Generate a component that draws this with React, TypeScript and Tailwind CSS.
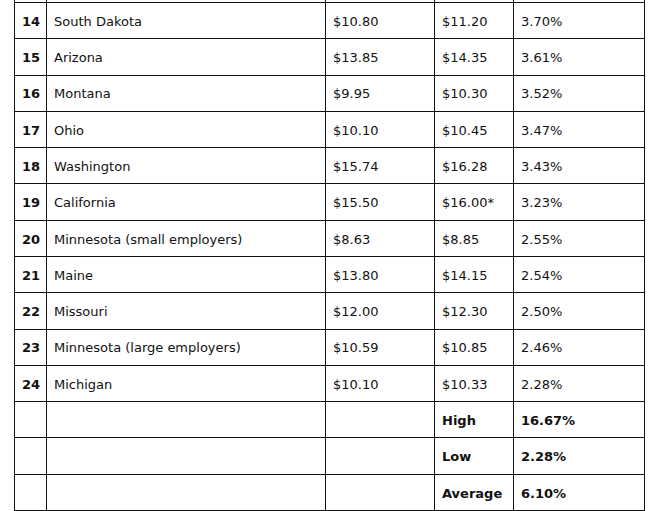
import React from "react";

type Row = { rank: string; state: string; a: string; b: string; pct: string };

const rows: Row[] = [
  { rank: "14", state: "South Dakota", a: "$10.80", b: "$11.20", pct: "3.70%" },
  { rank: "15", state: "Arizona", a: "$13.85", b: "$14.35", pct: "3.61%" },
  { rank: "16", state: "Montana", a: "$9.95", b: "$10.30", pct: "3.52%" },
  { rank: "17", state: "Ohio", a: "$10.10", b: "$10.45", pct: "3.47%" },
  { rank: "18", state: "Washington", a: "$15.74", b: "$16.28", pct: "3.43%" },
  { rank: "19", state: "California", a: "$15.50", b: "$16.00*", pct: "3.23%" },
  { rank: "20", state: "Minnesota (small employers)", a: "$8.63", b: "$8.85", pct: "2.55%" },
  { rank: "21", state: "Maine", a: "$13.80", b: "$14.15", pct: "2.54%" },
  { rank: "22", state: "Missouri", a: "$12.00", b: "$12.30", pct: "2.50%" },
  { rank: "23", state: "Minnesota (large employers)", a: "$10.59", b: "$10.85", pct: "2.46%" },
  { rank: "24", state: "Michigan", a: "$10.10", b: "$10.33", pct: "2.28%" },
];

const summary = [
  { label: "High", value: "16.67%" },
  { label: "Low", value: "2.28%" },
  { label: "Average", value: "6.10%" },
];

const td = "border border-[#111] px-[7px] pt-[2px] pb-0 align-middle";

export default function App() {
  return (
    <div
      className="relative h-[511px] w-[658px] overflow-hidden bg-white text-[13px] text-[#111]"
      style={{ fontFamily: '"DejaVu Sans", Verdana, sans-serif' }}
    >
      <table className="ml-[14px] mt-[-34.3px] w-[630px] table-fixed border-collapse">
        <colgroup>
          <col className="w-[32px]" />
          <col className="w-[279px]" />
          <col className="w-[109px]" />
          <col className="w-[79px]" />
          <col className="w-[131px]" />
        </colgroup>
        <tbody>
          <tr className="h-[36.29px]">
            <td className={td}></td>
            <td className={td}></td>
            <td className={td}></td>
            <td className={td}></td>
            <td className={td}></td>
          </tr>
          {rows.map((r) => (
            <tr key={r.rank} className="h-[36.29px]">
              <td className={`${td} font-bold`}>{r.rank}</td>
              <td className={td}>{r.state}</td>
              <td className={td}>{r.a}</td>
              <td className={td}>{r.b}</td>
              <td className={td}>{r.pct}</td>
            </tr>
          ))}
          {summary.map((s) => (
            <tr key={s.label} className="h-[36.29px]">
              <td className={td}></td>
              <td className={td}></td>
              <td className={td}></td>
              <td className={`${td} font-bold`}>{s.label}</td>
              <td className={`${td} font-bold`}>{s.value}</td>
            </tr>
          ))}
        </tbody>
      </table>
    </div>
  );
}
